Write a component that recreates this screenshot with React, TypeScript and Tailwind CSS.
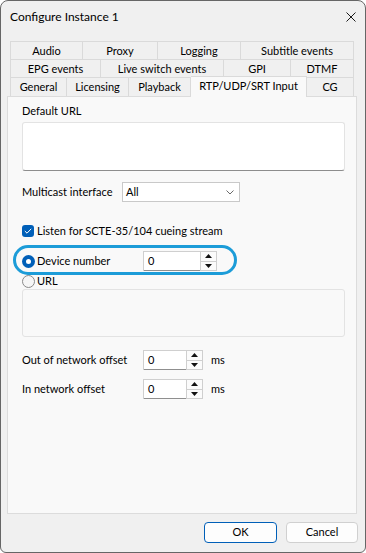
import React from "react";

const rows: { label: string; w: number }[][] = [
  [
    { label: "Audio", w: 73 },
    { label: "Proxy", w: 75 },
    { label: "Logging", w: 83 },
    { label: "Subtitle events", w: 113 },
  ],
  [
    { label: "EPG events", w: 91 },
    { label: "Live switch events", w: 123 },
    { label: "GPI", w: 67 },
    { label: "DTMF", w: 63 },
  ],
];

const bottomRow = [
  { label: "General", w: 57 },
  { label: "Licensing", w: 62 },
  { label: "Playback", w: 62 },
  { label: "RTP/UDP/SRT Input", w: 116, active: true },
  { label: "CG", w: 47 },
];

function Spin({ width }: { width: number }) {
  return (
    <div className="shrink-0 flex h-[20px] bg-white border border-[#cfcfcf]" style={{ width }}>
      <div className="flex-1 flex items-center pl-[4px] border-b border-b-[#8f8f8f] -mb-px">0</div>
      <div className="w-[16px] flex flex-col border-l border-[#cfcfcf] bg-[#fbfbfb]">
        <div className="flex-1 flex items-center justify-center border-b border-[#cfcfcf]">
          <svg width="7" height="4" viewBox="0 0 7 4">
            <path d="M0 4 L3.5 0 L7 4 Z" fill="#111" />
          </svg>
        </div>
        <div className="flex-1 flex items-center justify-center">
          <svg width="7" height="4" viewBox="0 0 7 4">
            <path d="M0 0 L3.5 4 L7 0 Z" fill="#111" />
          </svg>
        </div>
      </div>
    </div>
  );
}

export default function App() {
  return (
    <div className="w-[366px] h-[553px] font-['Lato',sans-serif] text-[11px] text-black whitespace-nowrap">
      <div className="w-[366px] h-[553px] flex flex-col border border-[#666666] rounded-t-[8px] rounded-b-[6px] bg-[#f0f0f0] overflow-hidden">
        {/* title bar */}
        <div className="h-[31px] flex items-center justify-between pl-[9px] pr-[9px]">
          <span className="text-[12px]">Configure Instance 1</span>
          <svg width="10" height="10" viewBox="0 0 10 10">
            <path d="M0.5 0.5 L9.5 9.5 M9.5 0.5 L0.5 9.5" stroke="#1a1a1a" strokeWidth="1" />
          </svg>
        </div>

        {/* tab strip */}
        <div className="mt-[9px] pl-[9px]">
          {rows.map((row, i) => (
            <div key={i} className="flex h-[18px]">
              {row.map((t, j) => (
                <div
                  key={t.label}
                  className={
                    "h-full flex items-center justify-center pt-[1px] border-t border-r border-[#dadada] " +
                    (j === 0 ? "border-l" : "")
                  }
                  style={{ width: t.w }}
                >
                  {t.label}
                </div>
              ))}
            </div>
          ))}
          <div className="flex h-[19px] items-end">
            {bottomRow.map((t, j) =>
              t.active ? (
                <div
                  key={t.label}
                  className="relative z-10 h-[21px] -mb-px flex items-center justify-center pb-[2px] bg-[#f9f9f9] border-t border-r border-[#dadada]"
                  style={{ width: t.w }}
                >
                  {t.label}
                </div>
              ) : (
                <div
                  key={t.label}
                  className={
                    "h-full flex items-center justify-center pt-[1px] border-t border-r border-[#dadada] " +
                    (j === 0 ? "border-l" : "")
                  }
                  style={{ width: t.w }}
                >
                  {t.label}
                </div>
              )
            )}
          </div>
        </div>

        {/* tab panel */}
        <div className="relative ml-[6px] w-[350px] h-[418px] border border-[#dcdcdc] bg-[#f9f9f9] pl-[14px] pt-[6px]">
          <div className="leading-[16px]">Default URL</div>
          <div className="mt-[3px] w-[323px] h-[49px] bg-white border border-[#e3e3e3] border-b-[#8d8d8d] rounded-[3px]" />

          <div className="mt-[11px] flex items-center h-[20px]">
            <div className="w-[100px] shrink-0">Multicast interface</div>
            <div className="w-[118px] h-[20px] flex items-center justify-between pl-[3px] pr-[5px] bg-white border border-[#c9c9c9]">
              <span>All</span>
              <svg width="8" height="5" viewBox="0 0 8 5">
                <path d="M0.5 0.5 L4 4 L7.5 0.5" stroke="#6a6a6a" fill="none" strokeWidth="1" />
              </svg>
            </div>
          </div>

          <div className="mt-[21px] flex items-center h-[16px] gap-[3px]">
            <div className="shrink-0 w-[12px] h-[12px] rounded-[3px] bg-[#005fb8] flex items-center justify-center">
              <svg width="8" height="6" viewBox="0 0 8 6">
                <path d="M0.8 3 L3 5.2 L7.2 0.8" stroke="#fff" fill="none" strokeWidth="1" />
              </svg>
            </div>
            <span>Listen for SCTE-35/104 cueing stream</span>
          </div>

          <div className="mt-[12px] flex items-center h-[20px]">
            <div className="w-[121px] shrink-0 flex items-center gap-[2px]">
              <div className="shrink-0 w-[13px] h-[13px] rounded-full bg-[#005fb8] flex items-center justify-center">
                <div className="w-[5px] h-[5px] rounded-full bg-white" />
              </div>
              <span>Device number</span>
            </div>
            <Spin width={74} />
          </div>

          <div className="mt-[2px] flex items-center h-[16px] gap-[2px]">
            <div className="shrink-0 w-[13px] h-[13px] rounded-full border border-[#8a8a8a] bg-[#f6f6f6]" />
            <span>URL</span>
          </div>
          <div className="w-[323px] h-[48px] bg-[#f9f9f9] border border-[#e3e3e3] rounded-[3px]" />

          <div className="mt-[13px] flex items-center h-[20px]">
            <div className="w-[121px] shrink-0">Out of network offset</div>
            <Spin width={60} />
            <span className="ml-[8px]">ms</span>
          </div>
          <div className="mt-[9px] flex items-center h-[20px]">
            <div className="w-[121px] shrink-0">In network offset</div>
            <Spin width={60} />
            <span className="ml-[8px]">ms</span>
          </div>

          {/* highlight callout */}
          <div className="absolute left-[5px] top-[148px] w-[224px] h-[30px] rounded-[15px] border-[3px] border-[#1c9cd8]" />
        </div>

        {/* buttons */}
        <div className="mt-[8px] flex justify-end gap-[9px] pr-[7px]">
          <div className="w-[73px] h-[21px] flex items-center justify-center rounded-[4px] border border-[#005fb8] bg-[#fdfdfd]">
            OK
          </div>
          <div className="w-[72px] h-[21px] flex items-center justify-center rounded-[4px] border border-[#d0d0d0] bg-[#fdfdfd]">
            Cancel
          </div>
        </div>
      </div>
    </div>
  );
}
